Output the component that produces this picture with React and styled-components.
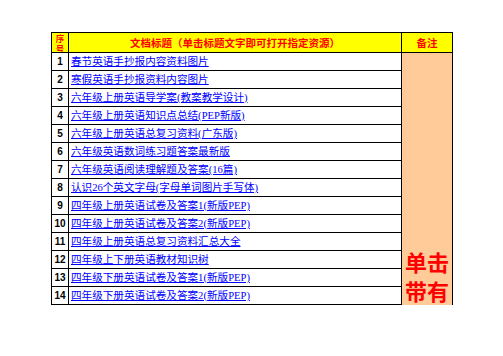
import React from "react";
import styled, { createGlobalStyle } from "styled-components";

const GlobalStyle = createGlobalStyle`
  body {
    margin: 0;
    background: #ffffff;
  }
`;

const Page = styled.div`
  width: 503px;
  height: 356px;
  overflow: hidden;
  padding: 32px 0 0 51px;
  box-sizing: border-box;
`;

const Sheet = styled.div`
  display: grid;
  grid-template-columns: 16px 332px 50px;
  grid-template-rows: 19px repeat(13, 17px) 18px;
  gap: 1px;
  width: max-content;
  padding: 1px 1px 0 1px;
  background: #000000;
`;

const HeadCell = styled.div`
  background: #ffff00;
  color: #ff0000;
  font-family: "Noto Sans CJK SC", sans-serif;
  font-weight: 700;
  font-size: ${({ small }) => (small ? "8.5px" : "10.5px")};
  line-height: ${({ small }) => (small ? "10px" : "19px")};
  text-align: center;
  overflow: hidden;
  white-space: ${({ small }) => (small ? "normal" : "nowrap")};
`;

const NumCell = styled.div`
  background: #ffffff;
  font-family: "Liberation Sans", sans-serif;
  font-weight: 700;
  font-size: 10px;
  line-height: 17px;
  text-align: center;
  color: #000000;
  box-sizing: border-box;
  border-bottom: ${({ last }) => (last ? "1px solid #000" : "none")};
`;

const TitleCell = styled.div`
  background: #ffffff;
  padding-left: 2px;
  display: flex;
  align-items: center;
  overflow: hidden;
  white-space: nowrap;
  box-sizing: border-box;
  border-bottom: ${({ last }) => (last ? "1px solid #000" : "none")};
`;

const Link = styled.a`
  color: #0000ff;
  font-family: "Liberation Serif", "Noto Sans CJK SC", serif;
  font-size: 10.6px;
  line-height: 13px;
  text-decoration: underline;
  text-underline-offset: 1px;
`;

const Remark = styled.div`
  grid-column: 3;
  grid-row: 2 / span 14;
  background: #ffcc99;
  overflow: hidden;
  padding: 194px 0 0 0;
  box-sizing: border-box;
  color: #ff0000;
  font-family: "Noto Sans CJK SC", sans-serif;
  font-weight: 700;
  font-size: 22px;
  line-height: 29px;
  text-align: center;
  word-break: break-all;
`;

const rows = [
  "春节英语手抄报内容资料图片",
  "寒假英语手抄报资料内容图片",
  "六年级上册英语导学案(教案教学设计)",
  "六年级上册英语知识点总结(PEP新版)",
  "六年级上册英语总复习资料(广东版)",
  "六年级英语数词练习题答案最新版",
  "六年级英语阅读理解题及答案(16篇)",
  "认识26个英文字母(字母单词图片手写体)",
  "四年级上册英语试卷及答案1(新版PEP)",
  "四年级上册英语试卷及答案2(新版PEP)",
  "四年级上册英语总复习资料汇总大全",
  "四年级上下册英语教材知识树",
  "四年级下册英语试卷及答案1(新版PEP)",
  "四年级下册英语试卷及答案2(新版PEP)",
];

export default function App() {
  return (
    <Page>
      <GlobalStyle />
      <Sheet>
        <HeadCell small>序号</HeadCell>
        <HeadCell>文档标题（单击标题文字即可打开指定资源）</HeadCell>
        <HeadCell>备注</HeadCell>
        <Remark>单击带有下划线的标题即可打开资源</Remark>
        {rows.map((title, i) => (
          <React.Fragment key={i}>
            <NumCell last={i === rows.length - 1} style={{ gridRow: i + 2 }}>
              {i + 1}
            </NumCell>
            <TitleCell last={i === rows.length - 1} style={{ gridRow: i + 2 }}>
              <Link href="#">{title}</Link>
            </TitleCell>
          </React.Fragment>
        ))}
      </Sheet>
    </Page>
  );
}
